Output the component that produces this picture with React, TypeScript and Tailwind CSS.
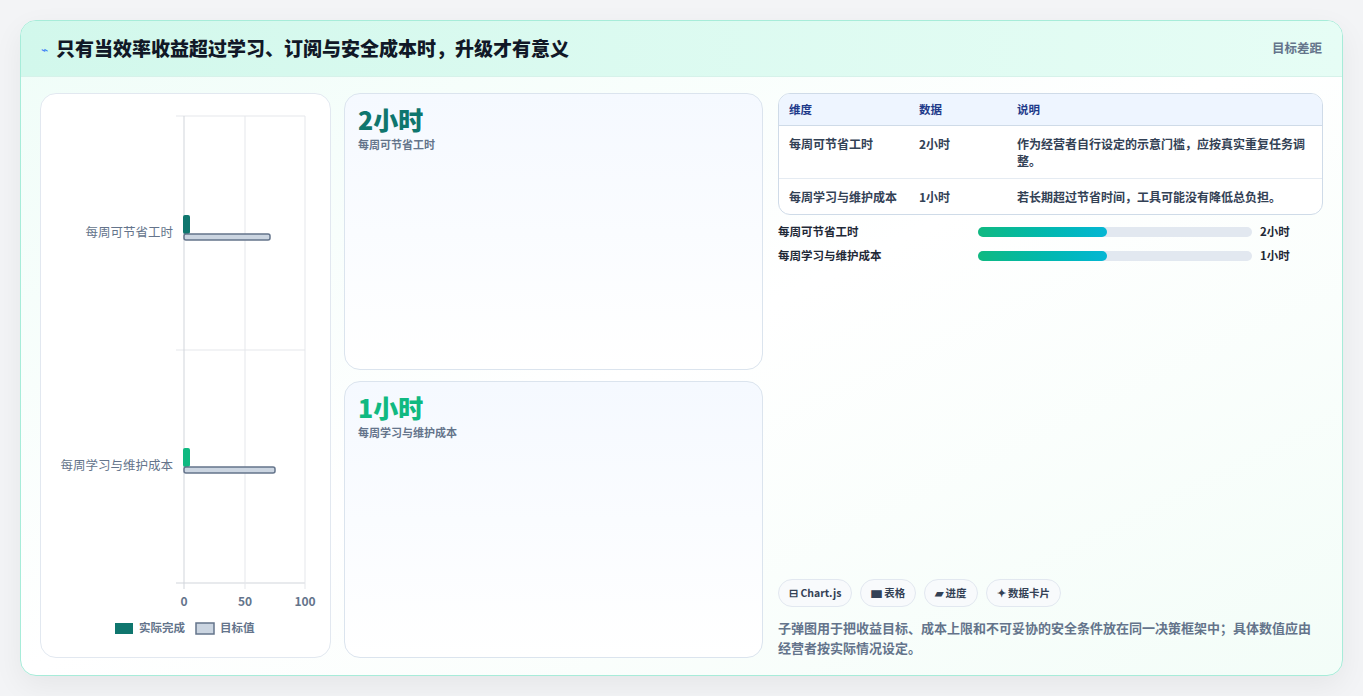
const font = { fontFamily: '"Noto Sans CJK SC", "Noto Sans", sans-serif' };

function BulletChart() {
  return (
    <svg width="290" height="563" viewBox="0 0 290 563" className="block">
      <line x1="135" y1="22" x2="264" y2="22" stroke="#e5e7eb" />
      <line x1="135" y1="256" x2="264" y2="256" stroke="#e5e7eb" />
      <line x1="135" y1="489" x2="264" y2="489" stroke="#d1d5db" />
      <line x1="143" y1="22" x2="143" y2="495" stroke="#d1d5db" />
      <line x1="204" y1="22" x2="204" y2="495" stroke="#e5e7eb" />
      <line x1="264" y1="22" x2="264" y2="495" stroke="#e5e7eb" />
      <rect x="142" y="121" width="7" height="19" rx="2" fill="#0f766e" />
      <rect x="143" y="140" width="86" height="6" rx="2" fill="#cbd5e1" stroke="#64748b" strokeWidth="1.5" />
      <rect x="142" y="354" width="7" height="19" rx="2" fill="#10b981" />
      <rect x="143" y="373" width="91" height="6" rx="2" fill="#cbd5e1" stroke="#64748b" strokeWidth="1.5" />
      <text x="132" y="143" textAnchor="end" fontSize="12.5" fill="#64748b" style={font}>每周可节省工时</text>
      <text x="132" y="376" textAnchor="end" fontSize="12.5" fill="#64748b" style={font}>每周学习与维护成本</text>
      <g fontSize="12" fontWeight="700" fill="#64748b" textAnchor="middle" style={font}>
        <text x="143" y="512">0</text>
        <text x="204" y="512">50</text>
        <text x="264" y="512">100</text>
      </g>
      <rect x="74" y="529" width="18" height="11" fill="#0f766e" />
      <text x="98" y="538" fontSize="11.5" fontWeight="700" fill="#64748b" style={font}>实际完成</text>
      <rect x="155" y="529" width="18" height="11" fill="#cbd5e1" stroke="#64748b" strokeWidth="1.5" />
      <text x="179" y="538" fontSize="11.5" fontWeight="700" fill="#64748b" style={font}>目标值</text>
    </svg>
  );
}

function StatCard({ value, label, color }: { value: string; label: string; color: string }) {
  return (
    <div className="flex-1 rounded-2xl border border-[#dbe4ee] bg-gradient-to-b from-[#f5f9ff] to-white px-[13px] py-[9px]">
      <div className={`text-[25px] font-black leading-[32px] ${color}`}>{value}</div>
      <div className="mt-[1px] text-[11px] font-bold text-[#64748b]">{label}</div>
    </div>
  );
}

const rows = [
  { d: "每周可节省工时", v: "2小时", n: "作为经营者自行设定的示意门槛，应按真实重复任务调整。" },
  { d: "每周学习与维护成本", v: "1小时", n: "若长期超过节省时间，工具可能没有降低总负担。" },
];

export default function App() {
  return (
    <div className="min-h-screen bg-[#f3f4f6] p-[20px]" style={font}>
      <div className="h-[656px] overflow-hidden rounded-2xl border border-[#a7ecd9] bg-gradient-to-br from-[#effdf8] via-white to-[#f3fdf8] shadow-[0_10px_30px_rgba(0,0,0,0.06)]">
        <div className="flex h-[56px] items-center justify-between border-b border-[#d6f2ea] bg-gradient-to-r from-[#d2f8ec] to-[#e6fdf5] px-[20px]">
          <div className="flex items-center gap-[8px]">
            <span className="text-[12px] text-[#3b82f6]">⌁</span>
            <h1 className="text-[19px] font-black text-[#111827]">只有当效率收益超过学习、订阅与安全成本时，升级才有意义</h1>
          </div>
          <span className="text-[12.5px] font-bold text-[#64748b]">目标差距</span>
        </div>
        <div className="flex h-[600px] gap-[13px] px-[19px] pb-[19px] pt-[16px]">
          <div className="w-[291px] shrink-0 rounded-2xl border border-[#e2e8f0] bg-white">
            <BulletChart />
          </div>
          <div className="flex w-[419px] shrink-0 flex-col gap-[11px]">
            <StatCard value="2小时" label="每周可节省工时" color="text-[#0f766e]" />
            <StatCard value="1小时" label="每周学习与维护成本" color="text-[#10b981]" />
          </div>
          <div className="ml-[2px] flex flex-1 flex-col">
            <div className="overflow-hidden rounded-xl border border-[#cfdbe8] bg-white font-bold">
              <div className="flex h-[32px] items-center border-b border-[#cfdbe8] bg-[#eef5ff] text-[11.5px] text-[#1e3a8a]">
                <div className="w-[140px] pl-[10px]">维度</div>
                <div className="w-[98px]">数据</div>
                <div className="flex-1">说明</div>
              </div>
              {rows.map((r, i) => (
                <div key={r.d} className={`flex py-[9px] text-[12px] text-[#334155] ${i === 0 ? "border-b border-[#e5ebf2]" : ""}`}>
                  <div className="w-[140px] pl-[10px] leading-[17px]">{r.d}</div>
                  <div className="w-[98px] leading-[17px]">{r.v}</div>
                  <div className="flex-1 pr-[14px] leading-[17px]">{r.n}</div>
                </div>
              ))}
            </div>
            <div className="mt-[8px] flex flex-col gap-[7px] text-[11.5px] font-bold text-[#1f2937]">
              {rows.map((r) => (
                <div key={r.d} className="flex h-[17px] items-center">
                  <div className="w-[200px]">{r.d}</div>
                  <div className="h-[10px] w-[274px] rounded-full bg-[#e2e8f0]">
                    <div className="h-full w-[47%] rounded-full bg-gradient-to-r from-[#10b981] to-[#06b6d4]" />
                  </div>
                  <div className="ml-[8px]">{r.v}</div>
                </div>
              ))}
            </div>
            <div className="mt-auto flex gap-[8px] text-[10.5px] font-bold text-[#334155]">
              {["⊟ Chart.js", "▆ 表格", "▰ 进度", "✦ 数据卡片"].map((t) => (
                <span key={t} className="rounded-full border border-[#e2e8f0] bg-[#f8fafc] px-[10px] py-[5px]">{t}</span>
              ))}
            </div>
            <p className="mt-[11px] text-[13px] font-bold leading-[20px] text-[#64748b]">
              子弹图用于把收益目标、成本上限和不可妥协的安全条件放在同一决策框架中；具体数值应由经营者按实际情况设定。
            </p>
          </div>
        </div>
      </div>
    </div>
  );
}
